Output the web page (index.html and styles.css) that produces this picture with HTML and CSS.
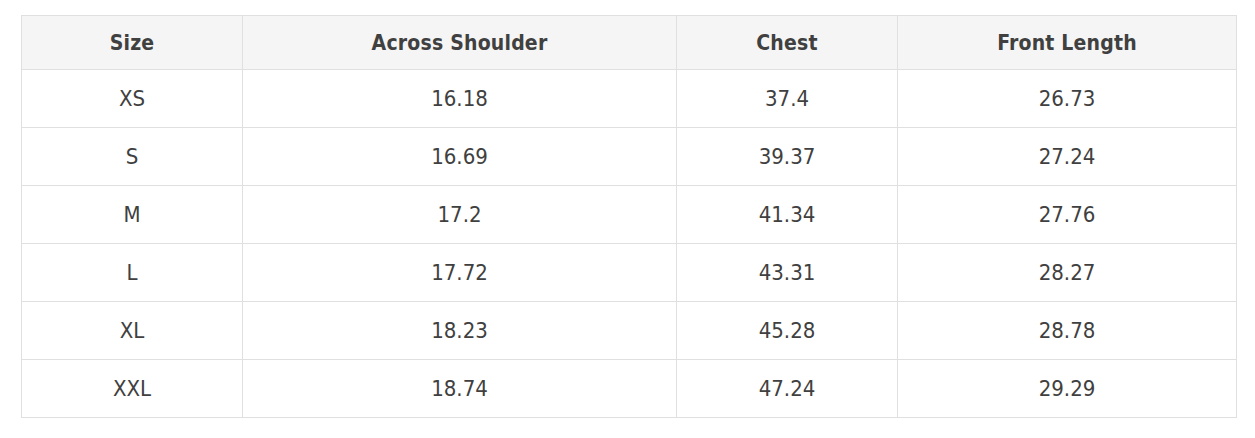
FILE: index.html
```html
<!DOCTYPE html>
<html>
<head>
<meta charset="utf-8">
<link rel="stylesheet" href="styles.css">
</head>
<body>
<div class="wrap">
<table class="size-table">
  <colgroup>
    <col class="c1"><col class="c2"><col class="c3"><col class="c4">
  </colgroup>
  <thead>
    <tr><th>Size</th><th>Across Shoulder</th><th>Chest</th><th>Front Length</th></tr>
  </thead>
  <tbody>
    <tr><td>XS</td><td>16.18</td><td>37.4</td><td>26.73</td></tr>
    <tr><td>S</td><td>16.69</td><td>39.37</td><td>27.24</td></tr>
    <tr><td>M</td><td>17.2</td><td>41.34</td><td>27.76</td></tr>
    <tr><td>L</td><td>17.72</td><td>43.31</td><td>28.27</td></tr>
    <tr><td>XL</td><td>18.23</td><td>45.28</td><td>28.78</td></tr>
    <tr><td>XXL</td><td>18.74</td><td>47.24</td><td>29.29</td></tr>
  </tbody>
</table>
</div>
</body>
</html>
```
FILE: styles.css
```css
html, body { margin: 0; padding: 0; background: #fff; }
.wrap { padding: 15px 19px 0 21px; }
.size-table {
  width: 1215px;
  border-collapse: collapse;
  table-layout: fixed;
  font-family: "DejaVu Sans Condensed", "DejaVu Sans", sans-serif;
  font-stretch: condensed;
  color: #404040;
}
.c1 { width: 221px; }
.c2 { width: 434px; }
.c3 { width: 221px; }
.c4 { width: 339px; }
.size-table th, .size-table td {
  border: 1px solid #e0e0e0;
  text-align: center;
  padding: 0;
}
.size-table th {
  height: 53px;
  background: #f5f5f5;
  font-weight: bold;
  font-size: 21px;
  letter-spacing: 0.2px;
}
.size-table td {
  height: 57px;
  font-size: 22px;
  font-weight: normal;
  letter-spacing: 0;
}
```
